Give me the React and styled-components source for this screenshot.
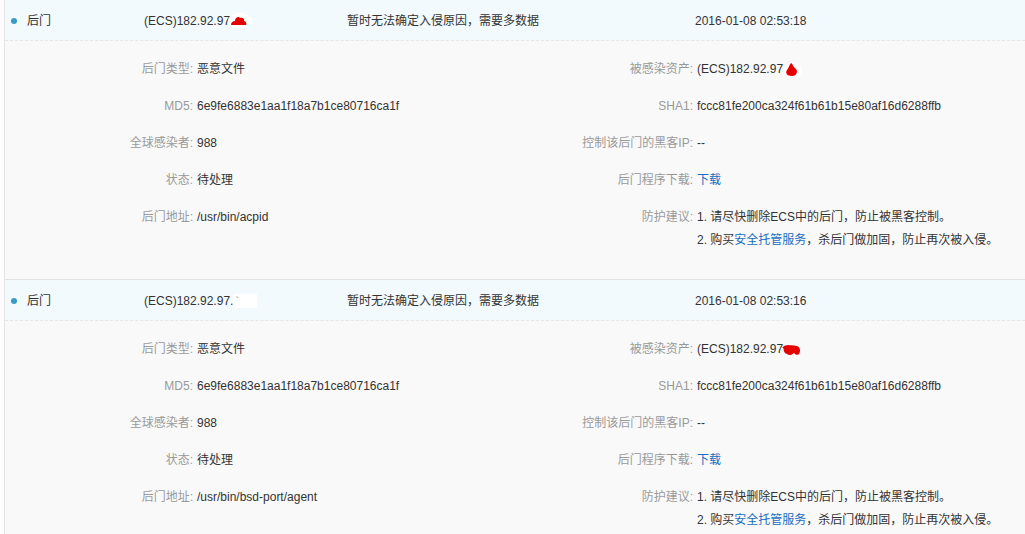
import React from "react";
import styled, { createGlobalStyle } from "styled-components";

const Global = createGlobalStyle`
  html, body { margin: 0; padding: 0; background: #fff; overflow: hidden; }
  body { font-family: "Liberation Sans", "Noto Sans CJK SC", sans-serif; font-size: 12px; color: #333; }
`;

const Wrap = styled.div`
  margin-left: 4px;
  width: 1040px;
  border-left: 1px solid #e3e3e3;
`;

const Section = styled.section`
  border-bottom: 1px solid #e2e2e2;
`;

const Header = styled.div`
  display: grid;
  grid-template-columns: 139px 203px 348px 1fr;
  align-items: center;
  height: 40px;
  line-height: 40px;
  padding-top: 1px;
  box-sizing: border-box;
  height: 41px;
  background: #f2fafe;
  border-bottom: 1px dashed #e6e6e6;
`;

const TypeCell = styled.div`
  display: flex;
  align-items: center;
  padding-left: 6px;
`;

const Dot = styled.span`
  width: 6px;
  height: 6px;
  border-radius: 50%;
  background: #3b9bc7;
  margin-right: 10px;
`;

const Cell = styled.div`
  white-space: nowrap;
  display: flex;
  align-items: center;
`;

const Details = styled.div`
  display: grid;
  grid-template-columns: 500px 500px;
  background: #f9f9f9;
  padding: 17px 0 27px;
`;

const Col = styled.div`
  display: flex;
  flex-direction: column;
  gap: 14px;
`;

const Item = styled.div`
  display: grid;
  grid-template-columns: 188px 1fr;
  column-gap: 4px;
  line-height: 23px;
`;

const Label = styled.div`
  text-align: right;
  color: #999;
  white-space: nowrap;
`;

const Value = styled.div`
  color: #333;
  white-space: nowrap;
  display: flex;
  flex-direction: column;
`;

const Line = styled.span`
  display: flex;
  align-items: center;
`;

const Link = styled.a`
  color: #1a6ec2;
  text-decoration: none;
`;

const Blob = styled.svg`
  display: inline-block;
  margin-left: ${(p) => p.$ml ?? 0}px;
  flex: none;
`;

const WhitePatch = styled.span`
  display: inline-block;
  background: #fff;
  color: #888;
  width: ${(p) => p.$w}px;
  height: 14px;
  line-height: 14px;
  font-size: 11px;
  padding-left: 2px;
`;

function CloudBlob() {
  return (
    <Blob width="24" height="16" viewBox="0 0 24 16" $ml={-2}>
      <ellipse cx="12" cy="8" rx="12" ry="8" fill="#fff" />
      <path d="M3 12 C3 9 5 8 7 8 C7 4 11 3 12 5 C14 4 17 6 16 8 C18 8 19 11 18 12 Z" fill="#e60000" />
    </Blob>
  );
}

function DropBlob() {
  return (
    <Blob width="20" height="18" viewBox="0 0 20 18" $ml={-1}>
      <ellipse cx="11" cy="10" rx="9" ry="8" fill="#fff" />
      <path d="M9 2 C11 3 11 6 14 8 C16 10 15 15 10 15 C5 15 3 12 5 9 C7 7 7 4 9 2 Z" fill="#e60000" />
    </Blob>
  );
}

function FlatBlob() {
  return (
    <Blob width="22" height="16" viewBox="0 0 22 16" $ml={-2}>
      <path d="M3 5 C6 3 12 3 16 4 C19 5 20 9 18 12 C16 14 14 12 13 11 C11 13 8 14 6 12 C3 11 2 8 3 5 Z" fill="#e60000" />
      <path d="M2 6 C4 4 6 4 8 4" stroke="#e60000" strokeWidth="2" fill="none" />
    </Blob>
  );
}

const records = [
  {
    ip: (
      <>
        (ECS)182.92.97<CloudBlob />
      </>
    ),
    time: "2016-01-08 02:53:18",
    asset: (
      <>
        (ECS)182.92.97<DropBlob />
      </>
    ),
    path: "/usr/bin/acpid",
  },
  {
    ip: (
      <>
        (ECS)182.92.97.<WhitePatch $w={22}>`</WhitePatch>
      </>
    ),
    time: "2016-01-08 02:53:16",
    asset: (
      <>
        (ECS)182.92.97<FlatBlob />
      </>
    ),
    path: "/usr/bin/bsd-port/agent",
  },
];

function Record({ r }) {
  return (
    <Section>
      <Header>
        <TypeCell>
          <Dot />
          后门
        </TypeCell>
        <Cell>{r.ip}</Cell>
        <Cell>暂时无法确定入侵原因，需要多数据</Cell>
        <Cell>{r.time}</Cell>
      </Header>
      <Details>
        <Col>
          <Item>
            <Label>后门类型:</Label>
            <Value>恶意文件</Value>
          </Item>
          <Item>
            <Label>MD5:</Label>
            <Value>6e9fe6883e1aa1f18a7b1ce80716ca1f</Value>
          </Item>
          <Item>
            <Label>全球感染者:</Label>
            <Value>988</Value>
          </Item>
          <Item>
            <Label>状态:</Label>
            <Value>待处理</Value>
          </Item>
          <Item>
            <Label>后门地址:</Label>
            <Value>{r.path}</Value>
          </Item>
        </Col>
        <Col>
          <Item>
            <Label>被感染资产:</Label>
            <Value>
              <Line>{r.asset}</Line>
            </Value>
          </Item>
          <Item>
            <Label>SHA1:</Label>
            <Value>fccc81fe200ca324f61b61b15e80af16d6288ffb</Value>
          </Item>
          <Item>
            <Label>控制该后门的黑客IP:</Label>
            <Value>--</Value>
          </Item>
          <Item>
            <Label>后门程序下载:</Label>
            <Value>
              <Line>
                <Link href="#">下载</Link>
              </Line>
            </Value>
          </Item>
          <Item>
            <Label>防护建议:</Label>
            <Value>
              <Line>1. 请尽快删除ECS中的后门，防止被黑客控制。</Line>
              <Line>
                2. 购买<Link href="#">安全托管服务</Link>，杀后门做加固，防止再次被入侵。
              </Line>
            </Value>
          </Item>
        </Col>
      </Details>
    </Section>
  );
}

export default function App() {
  return (
    <>
      <Global />
      <Wrap>
        {records.map((r, i) => (
          <Record key={i} r={r} />
        ))}
      </Wrap>
    </>
  );
}
